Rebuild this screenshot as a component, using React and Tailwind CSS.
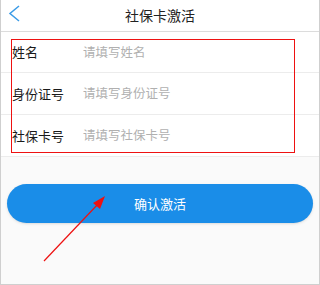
const rows = [
  { label: "姓名", placeholder: "请填写姓名", h: "h-[41px]" },
  { label: "身份证号", placeholder: "请填写身份证号", h: "h-[42px]" },
  { label: "社保卡号", placeholder: "请填写社保卡号", h: "h-[42px]" },
];

export default function App() {
  return (
    <div
      className="relative w-[320px] h-[285px] bg-[#fafafa] border-x border-b border-[#cfcfcf] overflow-hidden"
      style={{ fontFamily: '"Noto Sans CJK SC", "Noto Sans", sans-serif' }}
    >
      {/* Header */}
      <div className="relative h-8 bg-white border-b border-[#dcdcdc] flex items-center justify-center">
        <svg className="absolute left-0 top-0" width="30" height="30" viewBox="0 0 30 30">
          <polyline points="18,6 9,13.5 18,21" fill="none" stroke="#3b9be6" strokeWidth="1.5" />
        </svg>
        <p className="text-[14px] text-[#222]">社保卡激活</p>
      </div>

      {/* Form */}
      <div className="bg-white">
        {rows.map((r) => (
          <div key={r.label} className={`${r.h} flex items-center border-b border-[#ececec]`}>
            <span className="w-[82px] pl-[11px] text-[13px] text-[#1a1a1a] shrink-0">{r.label}</span>
            <input
              className="flex-1 min-w-0 text-[12.5px] text-[#333] placeholder:text-[#b0b0b0] outline-none bg-transparent"
              placeholder={r.placeholder}
            />
          </div>
        ))}
      </div>

      {/* Button */}
      <div className="mt-[27px] px-[6px]">
        <button className="w-full h-[39px] rounded-full bg-[#1a8de8] text-white text-[13px] shadow-sm">
          确认激活
        </button>
      </div>

      {/* Annotation box */}
      <div className="absolute left-[10px] top-[39px] w-[284px] h-[114px] border-[1.5px] border-[#ee1111] pointer-events-none" />

      {/* Annotation arrow */}
      <svg className="absolute left-0 top-0 pointer-events-none" width="320" height="285">
        <line x1="43" y1="261" x2="98" y2="203" stroke="#ee1111" strokeWidth="1.2" />
        <polygon points="104,196 92,203 99,209" fill="#ee1111" />
      </svg>
    </div>
  );
}
